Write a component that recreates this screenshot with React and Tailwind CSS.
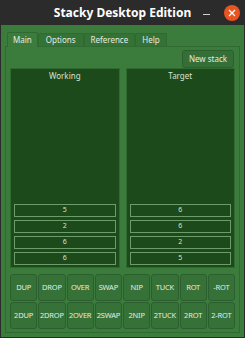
import React from 'react';

const ops = [
  'DUP', 'DROP', 'OVER', 'SWAP', 'NIP', 'TUCK', 'ROT', '-ROT',
  '2DUP', '2DROP', '2OVER', '2SWAP', '2NIP', '2TUCK', '2ROT', '2-ROT',
];

const StackPanel = ({ title, items }) => (
  <div className="flex flex-col bg-[#1c4a1b] border border-[#2f6a31] px-[3px] pb-[2px]">
    <div className="text-center text-[8px] leading-none text-[#d6e3d3] pt-[3px]">{title}</div>
    <div className="flex-1" />
    <div className="flex flex-col gap-[3px]">
      {items.map((v, i) => (
        <div key={i} className="h-[13px] flex items-center justify-center border border-[#6c9c6a] text-[7px] text-[#d6e3d3]">
          {v}
        </div>
      ))}
    </div>
  </div>
);

export default function App() {
  return (
    <div className="w-[245px] h-[338px] flex flex-col bg-[#2b2b2b] overflow-hidden" style={{ fontFamily: '"Noto Sans", "Open Sans", sans-serif' }}>
      {/* Title bar */}
      <div className="h-[25px] relative flex items-center justify-center">
        <span className="text-white font-bold text-[12px]">Stacky Desktop Edition</span>
        <span className="absolute left-[203px] top-[14px] w-[7px] h-[1px] bg-[#d0d0d0]" />
        <span className="absolute left-[224px] top-[5px] w-[16px] h-[16px] rounded-full bg-[#e95420] flex items-center justify-center">
          <svg width="8" height="8" viewBox="0 0 8 8"><path d="M1 1 L7 7 M7 1 L1 7" stroke="white" strokeWidth="1.3" /></svg>
        </span>
      </div>

      {/* Window body */}
      <div className="flex-1 bg-[#3b7c3d] mx-[1px] mb-[1px] px-[4px] pt-[6px] pb-[4px] flex flex-col">
        {/* Tabs */}
        <div className="flex items-end h-[15px] pl-[2px] text-[8px] text-[#e4ece3]">
          <div className="h-[15px] px-[5px] flex items-center bg-[#3b7c3d] border border-b-0 border-[#2f6a31] rounded-t-[2px] relative top-[1px]">Main</div>
          <div className="h-[13px] px-[7px] flex items-center bg-[#357236] border border-b-0 border-[#2f6a31] rounded-t-[2px]">Options</div>
          <div className="h-[13px] px-[6px] flex items-center bg-[#357236] border border-b-0 border-[#2f6a31] rounded-t-[2px]">Reference</div>
          <div className="h-[13px] px-[6px] flex items-center bg-[#357236] border border-b-0 border-[#2f6a31] rounded-t-[2px]">Help</div>
        </div>

        {/* Tab pane */}
        <div className="flex-1 border border-[#2f6a31] flex flex-col px-[4px] pt-[3px] pb-[3px]">
          <div className="flex justify-end pr-[1px]">
            <button className="h-[18px] px-[6px] rounded-[3px] bg-[#356f37] border border-[#2c5f2e] text-[8px] text-[#e4ece3]">New stack</button>
          </div>

          <div className="flex-1 grid grid-cols-2 gap-[6px]">
            <StackPanel title="Working" items={['5', '2', '6', '6']} />
            <StackPanel title="Target" items={['6', '6', '2', '5']} />
          </div>

          <div className="grid grid-cols-8 gap-[1px] mt-[6px]">
            {ops.map((op) => (
              <button key={op} className="h-[27px] rounded-[3px] bg-[#367238] border border-[#2c5f2e] text-[7.5px] text-[#e4ece3] tracking-tight">
                {op}
              </button>
            ))}
          </div>
        </div>
      </div>
    </div>
  );
}
